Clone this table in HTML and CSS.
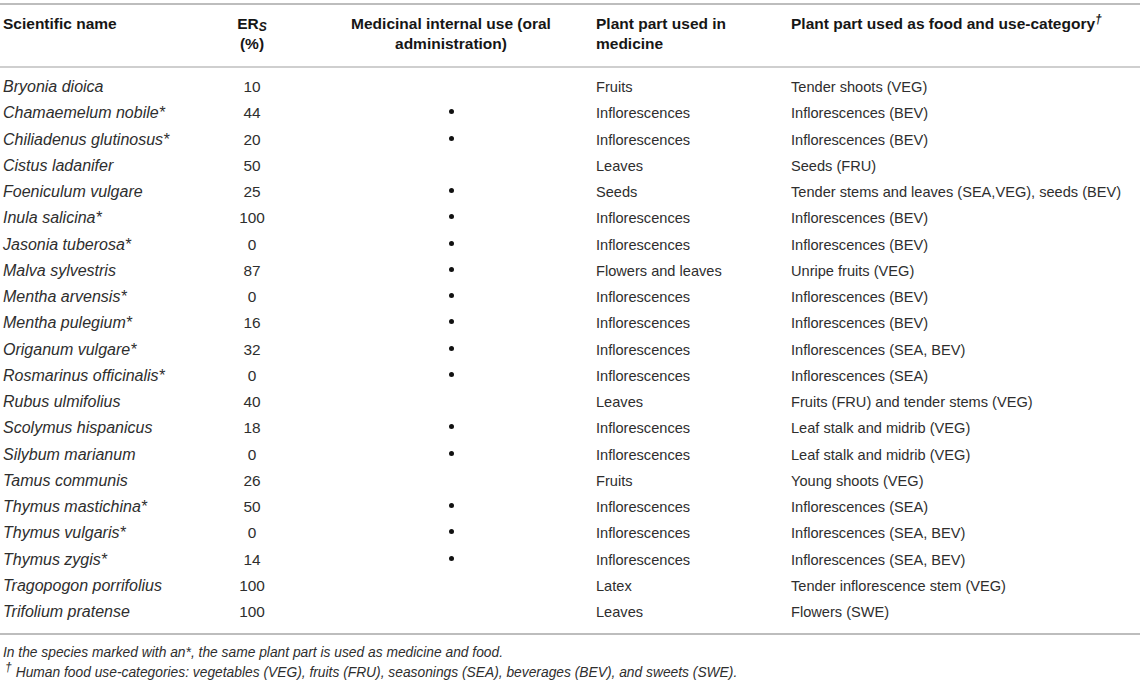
FILE: index.html
```html
<!DOCTYPE html>
<html lang="en">
<head>
  <meta charset="UTF-8">
  <meta name="viewport" content="width=device-width, initial-scale=1.0">
  <title>Medicinal and food plants</title>
  <link rel="stylesheet" href="styles.css">
</head>
<body>
  <table class="plants">
    <colgroup>
      <col class="c-name">
      <col class="c-ers">
      <col class="c-oral">
      <col class="c-med">
      <col class="c-food">
    </colgroup>
    <thead>
      <tr>
        <th>Scientific name</th>
        <th class="center">ER<sub>S</sub><br>(%)</th>
        <th class="center">Medicinal internal use (oral administration)</th>
        <th>Plant part used in medicine</th>
        <th>Plant part used as food and use-category<sup>†</sup></th>
      </tr>
    </thead>
    <tbody>
      <tr><td class="sp">Bryonia dioica</td><td class="num">10</td><td class="oral"></td><td>Fruits</td><td>Tender shoots (VEG)</td></tr>
      <tr><td class="sp">Chamaemelum nobile*</td><td class="num">44</td><td class="oral"><span class="dot"></span></td><td>Inflorescences</td><td>Inflorescences (BEV)</td></tr>
      <tr><td class="sp">Chiliadenus glutinosus*</td><td class="num">20</td><td class="oral"><span class="dot"></span></td><td>Inflorescences</td><td>Inflorescences (BEV)</td></tr>
      <tr><td class="sp">Cistus ladanifer</td><td class="num">50</td><td class="oral"></td><td>Leaves</td><td>Seeds (FRU)</td></tr>
      <tr><td class="sp">Foeniculum vulgare</td><td class="num">25</td><td class="oral"><span class="dot"></span></td><td>Seeds</td><td>Tender stems and leaves (SEA,VEG), seeds (BEV)</td></tr>
      <tr><td class="sp">Inula salicina*</td><td class="num">100</td><td class="oral"><span class="dot"></span></td><td>Inflorescences</td><td>Inflorescences (BEV)</td></tr>
      <tr><td class="sp">Jasonia tuberosa*</td><td class="num">0</td><td class="oral"><span class="dot"></span></td><td>Inflorescences</td><td>Inflorescences (BEV)</td></tr>
      <tr><td class="sp">Malva sylvestris</td><td class="num">87</td><td class="oral"><span class="dot"></span></td><td>Flowers and leaves</td><td>Unripe fruits (VEG)</td></tr>
      <tr><td class="sp">Mentha arvensis*</td><td class="num">0</td><td class="oral"><span class="dot"></span></td><td>Inflorescences</td><td>Inflorescences (BEV)</td></tr>
      <tr><td class="sp">Mentha pulegium*</td><td class="num">16</td><td class="oral"><span class="dot"></span></td><td>Inflorescences</td><td>Inflorescences (BEV)</td></tr>
      <tr><td class="sp">Origanum vulgare*</td><td class="num">32</td><td class="oral"><span class="dot"></span></td><td>Inflorescences</td><td>Inflorescences (SEA, BEV)</td></tr>
      <tr><td class="sp">Rosmarinus officinalis*</td><td class="num">0</td><td class="oral"><span class="dot"></span></td><td>Inflorescences</td><td>Inflorescences (SEA)</td></tr>
      <tr><td class="sp">Rubus ulmifolius</td><td class="num">40</td><td class="oral"></td><td>Leaves</td><td>Fruits (FRU) and tender stems (VEG)</td></tr>
      <tr><td class="sp">Scolymus hispanicus</td><td class="num">18</td><td class="oral"><span class="dot"></span></td><td>Inflorescences</td><td>Leaf stalk and midrib (VEG)</td></tr>
      <tr><td class="sp">Silybum marianum</td><td class="num">0</td><td class="oral"><span class="dot"></span></td><td>Inflorescences</td><td>Leaf stalk and midrib (VEG)</td></tr>
      <tr><td class="sp">Tamus communis</td><td class="num">26</td><td class="oral"></td><td>Fruits</td><td>Young shoots (VEG)</td></tr>
      <tr><td class="sp">Thymus mastichina*</td><td class="num">50</td><td class="oral"><span class="dot"></span></td><td>Inflorescences</td><td>Inflorescences (SEA)</td></tr>
      <tr><td class="sp">Thymus vulgaris*</td><td class="num">0</td><td class="oral"><span class="dot"></span></td><td>Inflorescences</td><td>Inflorescences (SEA, BEV)</td></tr>
      <tr><td class="sp">Thymus zygis*</td><td class="num">14</td><td class="oral"><span class="dot"></span></td><td>Inflorescences</td><td>Inflorescences (SEA, BEV)</td></tr>
      <tr><td class="sp">Tragopogon porrifolius</td><td class="num">100</td><td class="oral"></td><td>Latex</td><td>Tender inflorescence stem (VEG)</td></tr>
      <tr><td class="sp">Trifolium pratense</td><td class="num">100</td><td class="oral"></td><td>Leaves</td><td>Flowers (SWE)</td></tr>
    </tbody>
  </table>

  <div class="notes">
    <p>In the species marked with an*, the same plant part is used as medicine and food.</p>
    <p><sup class="dagger">†</sup>Human food use-categories: vegetables (VEG), fruits (FRU), seasonings (SEA), beverages (BEV), and sweets (SWE).</p>
  </div>
</body>
</html>
```

FILE: styles.css
```css
body {
  margin: 0;
  padding-top: 3px;
  background-color: #fff;
  font-family: "Liberation Sans", Arial, sans-serif;
  color: #2e2e2e;
}
.plants {
  width: 1140px;
  table-layout: fixed;
  border-collapse: collapse;
  border-top: 2px solid #bdbdbd;
  border-bottom: 2px solid #bdbdbd;
  font-size: 14.6px;
}
.c-name { width: 192px; }
.c-ers { width: 120px; }
.c-oral { width: 278px; }
.c-med { width: 195px; }
.c-food { width: 355px; }
.plants th {
  text-align: left;
  vertical-align: top;
  font-size: 15.5px;
  font-weight: bold;
  color: #161616;
  line-height: 20px;
  padding: 9px 6px 12px;
  border-bottom: 2px solid #cfcfcf;
}
.plants td {
  line-height: 20.25px;
  padding: 3px 6px;
  white-space: nowrap;
}
.plants th:first-child,
.plants td:first-child {
  padding-left: 3px;
}
.plants tbody tr:first-child td {
  padding-top: 9px;
}
.plants tbody tr:last-child td {
  padding-bottom: 11px;
}
.plants .center,
.plants .num,
.plants .oral {
  text-align: center;
}
.plants .num {
  font-size: 15.4px;
}
.plants .sp {
  font-size: 16px;
  font-style: italic;
}
.plants .dot {
  display: inline-block;
  width: 5px;
  height: 5px;
  border-radius: 50%;
  background-color: #111;
  vertical-align: 4px;
}
.plants sub {
  font-style: italic;
  font-size: 12px;
  vertical-align: -2px;
  line-height: 0;
}
.plants sup,
.notes sup {
  font-style: italic;
  font-size: 12px;
  vertical-align: 6px;
  line-height: 0;
}
.notes {
  padding: 8px 3px 0;
  font-size: 13.8px;
  font-style: italic;
  line-height: 20px;
}
.notes p {
  margin: 0;
}
.notes .dagger {
  margin: 0 4px 0 2px;
}
```
